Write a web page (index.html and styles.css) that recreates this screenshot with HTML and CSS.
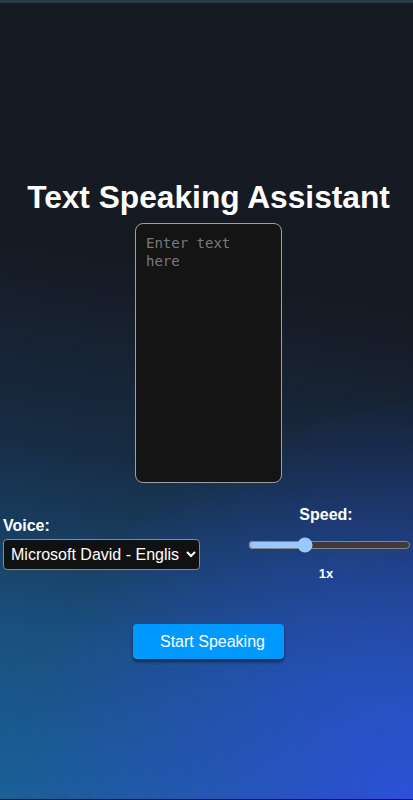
FILE: index.html
```html
<!DOCTYPE html>
<html lang="en">
<head>
<meta charset="utf-8">
<title>Text Speaking Assistant</title>
<link rel="stylesheet" href="styles.css">
</head>
<body>
<main class="app">
  <h1 class="title">Text Speaking Assistant</h1>
  <textarea class="text-input" placeholder="Enter text here"></textarea>
  <div class="controls">
    <div class="voice-group">
      <label class="label" for="voice">Voice:</label>
      <select id="voice" class="voice-select">
        <option>Microsoft David - English (United States)</option>
      </select>
    </div>
    <div class="speed-group">
      <label class="label" for="speed">Speed:</label>
      <input id="speed" class="speed-range" type="range" min="0.5" max="2" step="0.1" value="1">
      <span class="speed-value">1x</span>
    </div>
  </div>
  <button class="speak-btn" type="button">Start Speaking</button>
</main>
</body>
</html>
```
FILE: styles.css
```css
html {
  color-scheme: dark;
  height: 100%;
}
body {
  margin: 0;
  min-height: 100vh;
  box-sizing: border-box;
  border-top: 3px solid #2c3d48;
  border-bottom: 1px solid #141a22;
  font-family: "Liberation Sans", Arial, sans-serif;
  color: #fff;
  background:
    radial-gradient(ellipse 95% 50% at 100% 100%, rgba(44, 80, 214, 1) 0%, rgba(44, 80, 214, 0) 100%),
    linear-gradient(190deg, #161a23 0%, #161a23 36%, #172c44 58%, #19507e 80%, #1b609a 100%);
}
.app {
  display: flex;
  flex-direction: column;
  align-items: center;
  padding: 176px 0 0 4px;
}
.title {
  margin: 0;
  font-size: 31.7px;
  line-height: 37px;
  font-weight: bold;
  text-align: center;
  white-space: nowrap;
}
.text-input {
  margin-top: 7px;
  width: 147px;
  height: 260px;
  box-sizing: border-box;
  padding: 10px 10px;
  background: #141414;
  color: #ddd;
  border: 1px solid #a0a0a0;
  border-radius: 8px;
  font-family: "DejaVu Sans Mono", "Liberation Mono", monospace;
  font-size: 14px;
  line-height: 18px;
  resize: none;
}
.text-input::placeholder {
  color: #7a7a7a;
}
.controls {
  align-self: stretch;
  display: flex;
  justify-content: space-between;
  align-items: center;
  margin: 23px 0 0 -4px;
  padding-left: 3px;
}
.voice-group {
  display: flex;
  flex-direction: column;
  align-items: flex-start;
}
.label {
  font-size: 16px;
  line-height: 18px;
  font-weight: bold;
}
.voice-select {
  margin-top: 4px;
  width: 197px;
  height: 31px;
  box-sizing: border-box;
  padding: 0 4px 0 3px;
  background: #111;
  color: #fff;
  border: 1px solid #8a8a8a;
  border-radius: 4px;
  font-family: "Liberation Sans", Arial, sans-serif;
  font-size: 16px;
}
.speed-group {
  width: 174px;
  display: flex;
  flex-direction: column;
  align-items: center;
}
.speed-range {
  align-self: flex-end;
  width: 163px;
  height: 16px;
  margin: 13px 2px 0 0;
}
.speed-value {
  margin-top: 13px;
  font-size: 13px;
  line-height: 15px;
  font-weight: bold;
}
.speak-btn {
  margin-top: 43px;
  width: 151px;
  height: 35px;
  padding: 0 0 0 27px;
  text-align: left;
  white-space: nowrap;
  background: #0099ff;
  color: #fff;
  border: none;
  border-radius: 4px;
  box-shadow: 0 3px 3px rgba(0, 0, 0, 0.45);
  font-family: "Liberation Sans", Arial, sans-serif;
  font-size: 16px;
}
```
